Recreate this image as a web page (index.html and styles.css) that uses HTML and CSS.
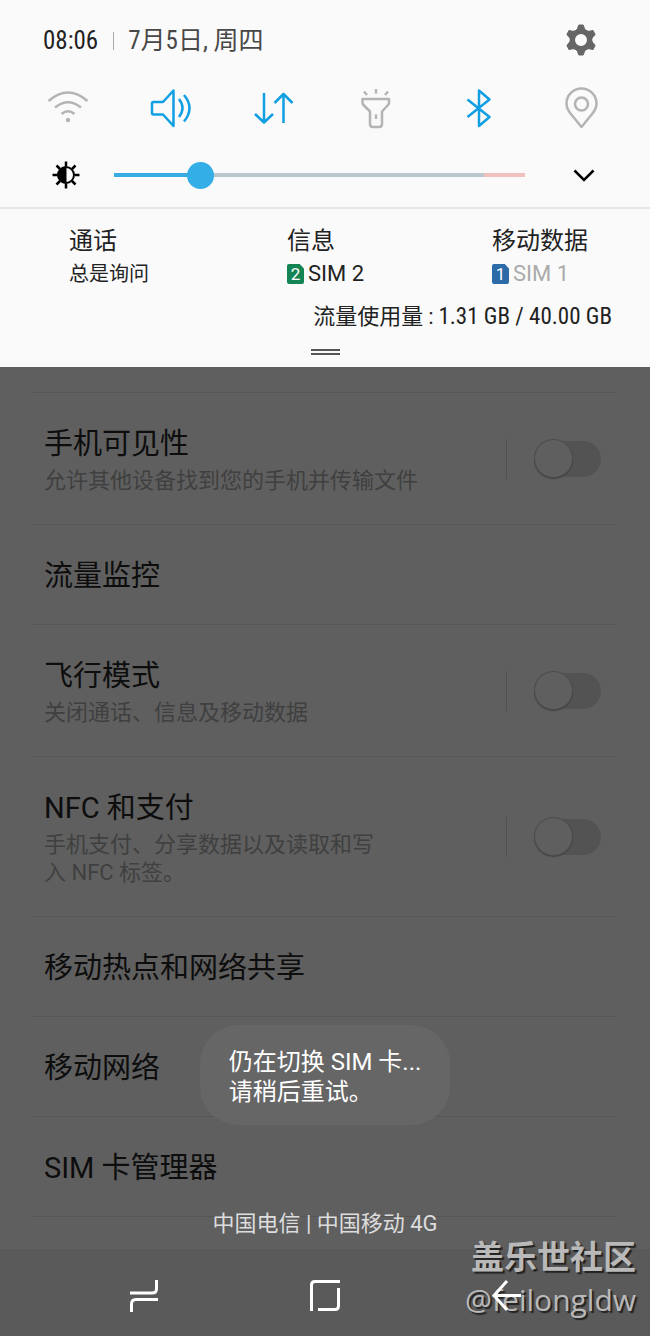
FILE: index.html
```html
<!DOCTYPE html>
<html lang="zh-CN">
<head>
<meta charset="UTF-8"><meta name="viewport" content="width=device-width,initial-scale=1">
<title>连接</title>
<link rel="stylesheet" href="styles.css">
</head>
<body>
<header class="panel">
  <div class="status">
    <span class="time">08:06</span>
    <span class="date">7月5日, 周四</span>
    <button class="gear" aria-label="设置">
      <svg width="34" height="34" viewBox="-17 -16 34 34">
        <circle r="8.500" fill="none" stroke="#666" stroke-width="5"/>
        <g fill="#666" stroke="#666" stroke-linejoin="round">
          <path id="tooth" d="M-6-8.500Q-3-10.500-2.200-15H2.200Q3-10.500 6-8.500z"/>
          <use href="#tooth" transform="rotate(60)"/>
          <use href="#tooth" transform="rotate(120)"/>
          <use href="#tooth" transform="rotate(180)"/>
          <use href="#tooth" transform="rotate(240)"/>
          <use href="#tooth" transform="rotate(300)"/>
        </g>
      </svg>
    </button>
  </div>

  <div class="toggles">
    <button aria-label="WLAN">
      <svg viewBox="0 0 44 44"><path d="M2.500 15Q22-2 41.500 15M9 21.500Q22 11 35 21.500M15.500 28Q22 22.500 28.500 28"/><circle class="dot" cx="22" cy="34" r="2.200"/></svg>
    </button>
    <button class="on" aria-label="声音">
      <svg viewBox="0 0 44 44"><path d="M14 16H4.500Q3 16 3 17.500V27Q3 28.500 4.500 28.500H14L24.500 40V4.500zM30 13Q37 22 30 31M35 9Q46 22 35 35.500"/></svg>
    </button>
    <button class="on" aria-label="移动数据">
      <svg viewBox="0 0 44 44"><path d="M12 7V36.500M3 28L12 36.500 21 28M31.500 37V8M22.500 17L31.500 8 40.500 17"/></svg>
    </button>
    <button aria-label="手电筒">
      <svg viewBox="0 0 44 44"><path d="M8.500 13H35V17Q35 18 34 19L28 25.500V38Q28 41 25 41H19Q16 41 16 38V25.500L9.500 19Q8.500 18 8.500 17zM22 3V7.500M10 5.500L13 9M34 5.500L31 9M22 28.500V33"/></svg>
    </button>
    <button class="on" aria-label="蓝牙">
      <svg viewBox="0 0 44 44"><path d="M10.500 13.500L32.500 31 22 40V4.500L32.500 13.500 10.500 31"/></svg>
    </button>
    <button aria-label="位置">
      <svg viewBox="0 0 44 44"><path d="M21.500 41L10.500 27.500Q6.500 22.500 6.500 17.500A15 15 0 0 1 36.500 17.500Q36.500 22.500 32.500 27.500z"/><circle cx="21.500" cy="18" r="6.500"/></svg>
    </button>
  </div>

  <div class="brightness">
    <svg width="28" height="28" viewBox="-14 -14 28 28" stroke="#000" fill="none">
      <circle r="8" stroke-width="2"/>
      <path d="M0-8A8 8 0 0 0 0 8z" fill="#000"/>
      <path stroke-width="2.500" d="M0-13.500V-9M0 13.500V9M-13.500 0H-9M13.500 0H9M-9.500-9.500L-6-6M9.500-9.500L6-6M-9.500 9.500L-6 6M9.500 9.500L6 6"/>
    </svg>
    <input type="range" min="0" max="100" value="19" aria-label="亮度">
    <button aria-label="展开">
      <svg width="24" height="24" viewBox="0 0 24 24" fill="none" stroke="#000" stroke-width="2.500"><path d="M2.500 7.500L12 17 21.500 7.500"/></svg>
    </button>
  </div>

  <div class="sims">
    <div><h2>通话</h2><p class="ask">总是询问</p></div>
    <div><h2>信息</h2><p><span class="badge green">2</span>SIM 2</p></div>
    <div><h2>移动数据</h2><p class="off"><span class="badge blue">1</span>SIM 1</p></div>
  </div>
  <p class="usage">流量使用量 : <span>1.31 GB / 40.00 GB</span></p>
  <div class="handle"></div>
</header>

<main>
  <ul class="list">
    <li>
      <label for="visible"><span class="name">手机可见性</span><span class="desc">允许其他设备找到您的手机并传输文件</span></label>
      <span class="switch"><input id="visible" type="checkbox"></span>
    </li>
    <li><span class="name">流量监控</span></li>
    <li>
      <label for="flight"><span class="name">飞行模式</span><span class="desc">关闭通话、信息及移动数据</span></label>
      <span class="switch"><input id="flight" type="checkbox"></span>
    </li>
    <li>
      <label for="nfc"><span class="name">NFC 和支付</span><span class="desc">手机支付、分享数据以及读取和写<br>入 NFC 标签。</span></label>
      <span class="switch"><input id="nfc" type="checkbox"></span>
    </li>
    <li><span class="name">移动热点和网络共享</span></li>
    <li><span class="name">移动网络</span></li>
    <li><span class="name">SIM 卡管理器</span></li>
  </ul>
  <div class="overlay">
    <div class="toast" role="status">仍在切换 SIM 卡...<br>请稍后重试。</div>
    <p class="carrier">中国电信 | 中国移动 4G</p>
  </div>
</main>

<nav>
  <button aria-label="最近">
    <svg width="32" height="36" viewBox="0 0 32 36"><path d="M2 16H24Q28.500 16 28.500 12V3M30 22.500H8Q3.500 22.500 3.500 27V35"/></svg>
  </button>
  <button aria-label="主页">
    <svg width="32" height="36" viewBox="0 0 32 36"><path d="M2.500 34V8Q2.500 4.500 6 4.500H31M29.500 11V29Q29.500 32.500 26 32.500H9"/></svg>
  </button>
  <button aria-label="返回">
    <svg width="32" height="36" viewBox="0 0 32 36"><path d="M17 4L4 18.500 17 33M4 18.500H31"/></svg>
  </button>
</nav>
<div class="watermark"><b>盖乐世社区</b><span>@feilongldw</span></div>
</body>
</html>
```
FILE: styles.css
```css
:root{--bg:#fafafa;--fg:#222;--dim:#5f5f5f;--nav:#5a5a5a;--line:#565656;--accent:#109fe3;--off:#b4b4b4}
*,*::before{box-sizing:border-box}
body{margin:0;position:relative;min-height:100vh;display:flex;flex-direction:column;background:var(--dim);color:var(--fg);font-family:Roboto,"Noto Sans CJK SC",sans-serif}
h2,p,ul{margin:0;padding:0;font-weight:400}
button{padding:0;border:none;background:none;cursor:pointer;display:flex;align-items:center;justify-content:center}

.panel{background:var(--bg);padding-top:25px}
.status{display:flex;align-items:center;height:32px;padding:0 52px 0 43px;font:25px/32px "Roboto Condensed",Roboto,"Noto Sans CJK SC",sans-serif}
.date{margin-left:15px;color:#484848;display:flex;align-items:center}
.date::before{content:"";width:1px;height:18px;margin-right:14px;background:#aaa}
.gear{margin-left:auto}
.toggles{display:grid;grid-template-columns:repeat(6,1fr);margin-top:29px;padding:0 17px}
.toggles svg{width:44px;height:44px;fill:none;stroke:var(--off);stroke-width:2.5px;stroke-linejoin:round}
.toggles .on svg{stroke:var(--accent)}
.toggles .dot{fill:var(--off);stroke:none}
.brightness{display:flex;align-items:center;height:32px;margin-top:29px;padding:0 54px 0 52px}
.brightness input{appearance:none;flex:1;min-width:0;height:28px;margin:0 47px 0 34px;background:linear-gradient(90deg,#38abe3 21%,#bcc6cd 21% 90%,#f1bfbc 90%) center/100% 4px no-repeat}
.brightness input::-webkit-slider-thumb{appearance:none;width:27px;height:27px;border-radius:50%;background:#34aee7}

.sims{display:grid;grid-template-columns:218fr 205fr 158fr;margin-top:16px;padding:16px 0 0 69px;border-top:2px solid #e6e6e6}
.sims h2{font-size:24px;line-height:33px}
.sims p{display:flex;align-items:center;font-size:22px;line-height:32px}
.sims .ask{font-size:20px}
.sims .off{color:#aaa}
.badge{width:17px;height:20px;margin-right:4px;color:#fff;font-size:17px;line-height:21px;text-align:center;border-radius:2px;clip-path:polygon(0 0,75% 0,100% 22%,100% 100%,0 100%)}
.green{background:#158455}.blue{background:#2c6aa8}
.usage{margin-top:11px;padding-right:38px;text-align:right;font:22px/32px "Roboto Condensed",Roboto,"Noto Sans CJK SC",sans-serif}
.usage span{font-size:23px}
.handle{width:29px;height:6px;margin:16px auto 12px;border:solid #555;border-width:2px 0}

main{position:relative;flex:1;padding:25px 33px 32px 32px}
.list{list-style:none;border-top:1px solid var(--line)}
.list li{display:flex;align-items:center;justify-content:space-between;padding:0 16px 0 12px;border-bottom:1px solid var(--line)}
.list label,.list li>.name{padding:28px 0 25px}
.name{display:block;font-size:29px;line-height:46px;color:#0d0d0d}
.desc{display:block;padding-bottom:4px;font-size:22px;line-height:28px;color:#404040}
.switch{display:flex;align-items:center;height:40px;padding-left:27px;border-left:1px solid #505050}
.switch input{appearance:none;position:relative;width:67px;height:36px;margin:0;border-radius:18px;background:#535353}
.switch input::before{content:"";position:absolute;left:0;top:-2px;width:39px;height:39px;border:1px solid #4c4c4c;border-radius:50%;background:var(--dim);box-shadow:0 1px 1px #444}
.switch input:checked::before{left:28px}

.overlay{position:absolute;left:0;right:0;bottom:11px;display:flex;flex-direction:column;align-items:center}
.toast{margin-bottom:85px;padding:22px 29px 18px;border-radius:38px;background:#666;color:#fff;font-size:24px;line-height:30px}
.carrier{color:#ddd;font-size:22px;line-height:28px}

nav{display:grid;grid-template-columns:repeat(3,1fr);height:88px;padding:3px 53px 0;background:var(--nav)}
nav svg{position:relative;z-index:1;fill:none;stroke:#fff;stroke-width:3}
.watermark{position:absolute;right:14px;bottom:17px;display:flex;flex-direction:column;gap:4px;align-items:flex-end;color:#b9b9b9;text-shadow:2px 2px 1px #222;pointer-events:none}
.watermark b{font:bold 33px/42px "Noto Sans CJK SC",sans-serif}
.watermark span{font:30px/40px "Open Sans","Noto Sans",sans-serif}
```
